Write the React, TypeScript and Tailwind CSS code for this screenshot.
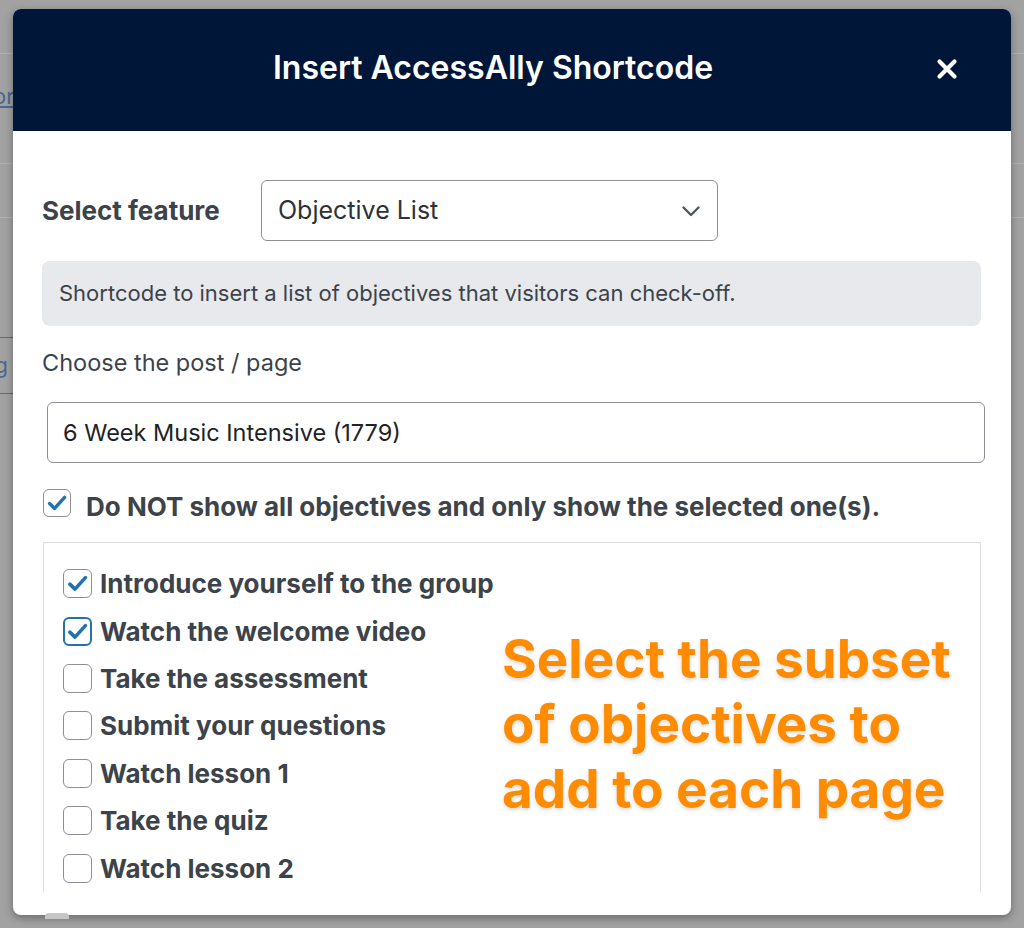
import React from "react";

function Check({ size }: { size: number }) {
  return (
    <svg width={size} height={size} viewBox="0 0 24 24" className="block">
      <path d="M4.6 12.6 L9.6 17.4 L19.6 6.4" fill="none" stroke="#2271b1" strokeWidth="3.4" strokeLinecap="round" strokeLinejoin="round" />
    </svg>
  );
}

function Box({ checked, focus, size }: { checked?: boolean; focus?: boolean; size: number }) {
  return (
    <div
      className={
        focus
          ? "flex items-center justify-center rounded-[6px] border-[2.5px] border-[#2271b1] bg-white shrink-0"
          : "flex items-center justify-center rounded-[6px] border-[1.5px] border-[#8c8f94] bg-white shrink-0"
      }
      style={{ width: size, height: size }}
    >
      {checked ? <Check size={size - 4} /> : null}
    </div>
  );
}

const items: { label: string; checked?: boolean; focus?: boolean }[] = [
  { label: "Introduce yourself to the group", checked: true },
  { label: "Watch the welcome video", checked: true, focus: true },
  { label: "Take the assessment" },
  { label: "Submit your questions" },
  { label: "Watch lesson 1" },
  { label: "Take the quiz" },
  { label: "Watch lesson 2" },
];

export default function App() {
  return (
    <div
      className="relative w-[1024px] h-[928px] overflow-hidden bg-[#a2a2a2]"
      style={{ fontFamily: "Inter, 'Noto Sans', Arial, sans-serif" }}
    >
      {/* page behind the overlay */}
      <div className="absolute left-0 right-0 top-[53px] h-px bg-[#b3b3b3]" />
      <div className="absolute left-0 right-0 top-[163px] h-px bg-[#acacac]" />
      <div className="absolute left-0 right-0 top-[217px] h-px bg-[#b3b3b3]" />
      <div className="absolute left-[-7px] top-[80px] text-[22px] text-[#4b6990] underline">or</div>
      <div className="absolute left-[-30px] top-[337px] h-[57px] w-[44px] border border-[#4b6e9c] flex items-center justify-end pr-[5px] text-[22px] text-[#4b6990]">
        g
      </div>

      {/* modal */}
      <div className="absolute left-[13px] top-[9px] w-[998px] h-[906px] bg-white rounded-[8px] overflow-hidden shadow-[0_3px_8px_rgba(0,0,0,0.35)]">
        <div className="relative h-[122px] bg-[#001639] flex items-center justify-center pr-[38px] pb-[4px]">
          <h1 className="text-white text-[32px] font-semibold">Insert AccessAlly Shortcode</h1>
          <button className="absolute right-[52px] top-[48px] w-[24px] h-[24px] flex items-center justify-center">
            <svg width="22" height="22" viewBox="0 0 22 22">
              <path d="M3.5 3.5 L18.5 18.5 M18.5 3.5 L3.5 18.5" stroke="white" strokeWidth="4.2" strokeLinecap="round" />
            </svg>
          </button>
        </div>

        <div className="pl-[29px] pr-[30px] pt-[49px] text-[#3c434a]">
          <div className="flex items-center">
            <div className="w-[219px] text-[26px] font-bold">Select feature</div>
            <div className="relative w-[457px] h-[61px] border-[1.5px] border-[#8c8f94] rounded-[6px] flex items-center pl-[16px] text-[25px] text-[#2c3338]">
              Objective List
              <svg className="absolute right-[16px] top-[24px]" width="20" height="13" viewBox="0 0 20 13">
                <path d="M2.5 2.5 L10 10 L17.5 2.5" fill="none" stroke="#50575e" strokeWidth="2.4" strokeLinecap="round" strokeLinejoin="round" />
              </svg>
            </div>
          </div>

          <div className="mt-[20px] h-[65px] rounded-[8px] bg-[#e7e9ec] flex items-center pl-[17px] text-[22px]">
            Shortcode to insert a list of objectives that visitors can check-off.
          </div>

          <div className="mt-[22px] text-[23.5px] leading-[30px]">Choose the post / page</div>

          <div className="mt-[24px] ml-[5px] w-[938px] h-[61px] border-[1.5px] border-[#8c8f94] rounded-[6px] flex items-center pl-[15px] text-[23.5px] text-[#1d2327]">
            6 Week Music Intensive (1779)
          </div>

          <div className="mt-[26px] ml-[1px] flex items-start">
            <Box checked size={28} />
            <div className="ml-[15px] pt-[4px] text-[26px] leading-[28px] font-bold">
              Do NOT show all objectives and only show the selected one(s).
            </div>
          </div>

          <div className="mt-[21px] ml-[1px] w-[938px] h-[350px] border-t border-x border-[#dcdcde] overflow-hidden pt-[17px] pl-[19px] flex">
            <div className="w-[439px] flex flex-col">
              {items.map((it) => (
                <div key={it.label} className="h-[48px] flex items-center">
                  <Box checked={it.checked} focus={it.focus} size={29} />
                  <span className="ml-[8px] text-[26px] font-bold whitespace-nowrap">{it.label}</span>
                </div>
              ))}
            </div>
            <div className="mt-[67px] text-[53px] leading-[65px] font-bold text-[#ff8c00] whitespace-nowrap [text-shadow:0_2px_4px_rgba(0,0,0,0.15)]">
              Select the subset
              <br />
              of objectives to
              <br />
              add to each page
            </div>
          </div>
        </div>
      </div>

      <div className="absolute left-[45px] top-[913px] w-[24px] h-[6px] rounded-t-[4px] bg-[#c6c6c6]" />
    </div>
  );
}
